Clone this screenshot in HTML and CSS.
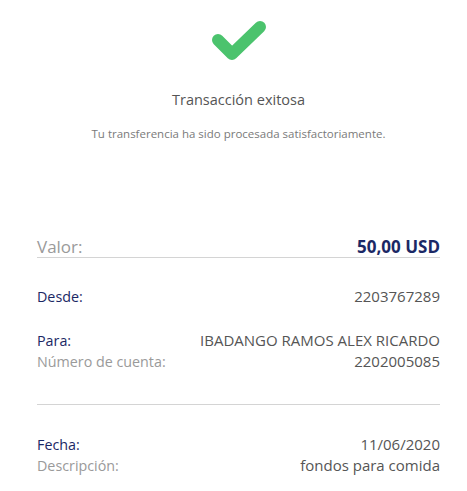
FILE: index.html
```html
<!DOCTYPE html>
<html lang="es">
<head>
<meta charset="utf-8">
<link rel="stylesheet" href="styles.css">
</head>
<body>
<main class="receipt">
  <header class="status">
    <svg class="check" width="56" height="44" viewBox="0 0 56 44">
      <polyline points="6,20 20,34 48,7" fill="none" stroke="#4bc36d" stroke-width="12" stroke-linecap="round" stroke-linejoin="round"/>
    </svg>
    <h1 class="title">Transacción exitosa</h1>
    <p class="subtitle">Tu transferencia ha sido procesada satisfactoriamente.</p>
  </header>

  <section class="amount">
    <span class="label-muted">Valor:</span>
    <span class="amount-value">50,00 USD</span>
  </section>

  <section class="group group-from">
    <div class="row"><span class="label-strong">Desde:</span><span class="value">2203767289</span></div>
  </section>

  <section class="group group-to">
    <div class="row"><span class="label-strong">Para:</span><span class="value">IBADANGO RAMOS ALEX RICARDO</span></div>
    <div class="row"><span class="label-muted">Número de cuenta:</span><span class="value">2202005085</span></div>
  </section>

  <section class="group group-date">
    <div class="row"><span class="label-strong">Fecha:</span><span class="value">11/06/2020</span></div>
    <div class="row"><span class="label-muted">Descripción:</span><span class="value">fondos para comida</span></div>
  </section>
</main>
</body>
</html>
```

FILE: styles.css
```css
* { box-sizing: border-box; }
html, body { margin: 0; padding: 0; background: #fff; }
body {
  font-family: "Open Sans", "Noto Sans", sans-serif;
  color: #555;
}
.receipt {
  width: 467px;
  padding: 20px 27px 0 37px;
  display: flex;
  flex-direction: column;
}
.status {
  display: flex;
  flex-direction: column;
  align-items: center;
}
.check { display: block; margin-left: 2px; }
.title {
  margin: 26px 0 0;
  font-size: 14.5px;
  font-weight: 400;
  line-height: 20px;
  color: #555;
}
.subtitle {
  margin: 16px 0 0;
  font-size: 11.5px;
  line-height: 16px;
  color: #7a7a7a;
}
.amount {
  margin-top: 94px;
  display: flex;
  justify-content: space-between;
  align-items: baseline;
  padding-bottom: 0;
  border-bottom: 1px solid #d4d4d4;
  font-size: 17px;
  line-height: 21px;
}
.amount-value { color: #1b2865; font-weight: 700; }
.label-muted { color: #9a9a9a; }
.label-strong { color: #1b2865; }
.value { color: #555; }
.group { font-size: 15px; line-height: 21px; }
.group .label-muted, .group .label-strong { font-size: 14.3px; }
.row { display: flex; justify-content: space-between; align-items: baseline; }
.group-from { margin-top: 28px; }
.group-to { margin-top: 23px; padding-bottom: 32px; border-bottom: 1px solid #d4d4d4; }
.group-date { margin-top: 29px; }
```
